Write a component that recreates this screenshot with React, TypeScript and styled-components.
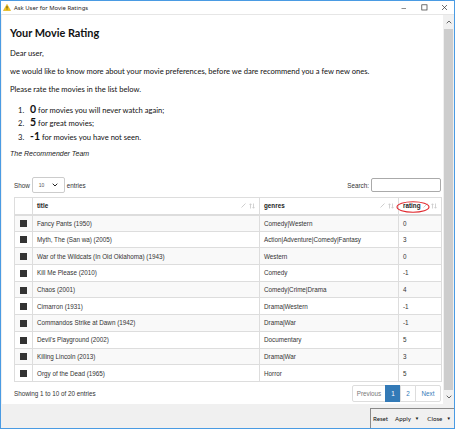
import React from "react";
import styled, { createGlobalStyle } from "styled-components";

const Global = createGlobalStyle`
  html, body { margin: 0; padding: 0; overflow: hidden; background: #fff; }
  * { box-sizing: border-box; }
`;

const Window = styled.div`
  width: 455px;
  height: 429px;
  border: 1px solid #4a9be3;
  display: flex;
  flex-direction: column;
  background: #f0f0f0;
  overflow: hidden;
`;

const TitleBar = styled.div`
  height: 14px;
  background: #fff;
  display: flex;
  align-items: center;
  padding-left: 2px;
  border-bottom: 1px solid #e6e6e6;
`;

const TitleText = styled.span`
  font-family: "Noto Sans", "Liberation Sans", sans-serif;
  font-size: 5.9px;
  color: #222;
  margin-left: 3px;
  flex: 1;
`;

const Controls = styled.div`
  display: flex;
  align-items: center;
  gap: 13.5px;
  padding-right: 6px;
`;

const Main = styled.div`
  flex: 1;
  display: flex;
  padding-left: 1px;
  min-height: 0;
`;

const Content = styled.div`
  flex: 1;
  background: #fff;
  padding-left: 8px;
  overflow: hidden;
  font-family: "Lato", "Liberation Sans", sans-serif;
  color: #111;
`;

const H1 = styled.h1`
  margin: 10px 0 0;
  font-size: 10.9px;
  line-height: 16px;
  font-weight: 700;
`;

const P = styled.p<{ $top?: number }>`
  margin: ${(p) => p.$top ?? 6}px 0 0;
  font-size: 7.6px;
  line-height: 12px;
  font-weight: 400;
`;

const Team = styled(P)`
  font-family: "Liberation Sans", Arial, sans-serif;
  font-size: 7px;
  font-style: italic;
  color: #1a1a1a;
`;

const List = styled.ol`
  margin: 7.5px 0 0;
  padding-left: 8px;
  list-style: none;
  font-size: 7.6px;
`;

const Item = styled.li`
  line-height: 13.5px;
  height: 13.5px;
  display: flex;
  align-items: baseline;
`;

const Num = styled.span`
  width: 12px;
  flex: none;
`;

const Big = styled.b`
  font-size: 10.5px;
  font-weight: 700;
  margin-right: 2px;
`;

const DataTable = styled.div`
  margin: 17px 0 0 4px;
  width: 427px;
  font-family: "Liberation Sans", Arial, sans-serif;
  font-size: 6.3px;
  color: #333;
`;

const TopRow = styled.div`
  display: flex;
  align-items: center;
  justify-content: space-between;
  height: 16px;
`;

const Inline = styled.div`
  display: flex;
  align-items: center;
  gap: 2px;
`;

const Select = styled.div`
  width: 33px;
  height: 16px;
  border: 1px solid #ccc;
  border-radius: 2px;
  display: flex;
  align-items: center;
  justify-content: space-between;
  padding: 0 6px 0 6px;
  font-size: 5px;
  color: #555;
`;

const SearchBox = styled.div`
  width: 70px;
  height: 14px;
  border: 1px solid #aaa;
  border-radius: 2px;
  background: #fff;
`;

const Table = styled.table`
  margin-top: 4px;
  width: 427px;
  border-collapse: collapse;
  table-layout: fixed;
  border: 1px solid #ddd;
`;

const Th = styled.th<{ $w: number }>`
  width: ${(p) => p.$w}px;
  height: 17px;
  text-align: left;
  font-weight: 700;
  padding: 0 0 0 4px;
  border: 1px solid #ddd;
  border-bottom: 2px solid #ddd;
  color: #222;
  position: relative;
`;

const ThInner = styled.div`
  display: flex;
  align-items: center;
  justify-content: space-between;
  padding-right: 4px;
`;

const ThIcons = styled.div`
  display: flex;
  align-items: center;
  gap: 3px;
`;

const Tr = styled.tr<{ $odd: boolean }>`
  height: 16.7px;
  background: ${(p) => (p.$odd ? "#f9f9f9" : "#fff")};
`;

const Td = styled.td`
  padding: 0 0 0 4px;
  border: 1px solid #ddd;
  white-space: nowrap;
  overflow: hidden;
`;

const BoxTd = styled.td`
  border: 1px solid #ddd;
  padding: 0;
  text-align: center;
`;

const Square = styled.span`
  display: inline-block;
  width: 7px;
  height: 7px;
  background: #333;
  vertical-align: middle;
`;

const Ellipse = styled.svg`
  position: absolute;
  left: -3px;
  top: 3px;
  pointer-events: none;
`;

const Bottom = styled.div`
  display: flex;
  align-items: center;
  justify-content: space-between;
  margin-top: 3px;
`;

const Pager = styled.div`
  display: flex;
  height: 17px;
`;

const PageBtn = styled.div<{ $w: number; $active?: boolean; $disabled?: boolean }>`
  width: ${(p) => p.$w}px;
  height: 17px;
  display: flex;
  align-items: center;
  justify-content: center;
  border: 1px solid ${(p) => (p.$active ? "#337ab7" : "#ddd")};
  margin-left: -1px;
  background: ${(p) => (p.$active ? "#337ab7" : "#fff")};
  color: ${(p) => (p.$active ? "#fff" : p.$disabled ? "#777" : "#337ab7")};
  &:first-child { border-radius: 2px 0 0 2px; }
  &:last-child { border-radius: 0 2px 2px 0; }
`;

const ScrollBar = styled.div`
  width: 11px;
  background: #f0f0f0;
  display: flex;
  flex-direction: column;
  align-items: center;
`;

const Arrow = styled.div`
  height: 14px;
  display: flex;
  align-items: center;
  justify-content: center;
`;

const Thumb = styled.div`
  flex: 1;
  width: 9px;
  background: #cdcdcd;
`;

const Footer = styled.div`
  height: 24px;
  display: flex;
  justify-content: flex-end;
  padding-top: 4px;
`;

const BtnGroup = styled.div`
  width: 84px;
  display: flex;
  align-items: center;
  border-left: 1px solid #8a8a8a;
  border-top: 1px solid #8a8a8a;
  padding: 0 0 0 2px;
  font-family: "Lato", "Liberation Sans", sans-serif;
  font-size: 6.2px;
  color: #111;
`;

const Btn = styled.span<{ $ml?: number }>`
  display: flex;
  align-items: center;
  gap: 4px;
  margin-left: ${(p) => p.$ml ?? 0}px;
`;

const Caret = styled.span`
  font-size: 4.5px;
`;

const Pencil = () => (
  <svg width="5" height="5" viewBox="0 0 5 5">
    <path d="M0.5 4.5 L4.5 0.5" stroke="#c8c8c8" strokeWidth="0.9" />
  </svg>
);

const Sort = () => (
  <svg width="6" height="6" viewBox="0 0 6 6" fill="none" stroke="#c8c8c8" strokeWidth="0.8">
    <path d="M1.5 5.5 V0.8 M0.5 1.8 L1.5 0.8 L2.5 1.8" />
    <path d="M4.5 0.5 V5.2 M3.5 4.2 L4.5 5.2 L5.5 4.2" />
  </svg>
);

const movies: [string, string, string][] = [
  ["Fancy Pants (1950)", "Comedy|Western", "0"],
  ["Myth, The (San wa) (2005)", "Action|Adventure|Comedy|Fantasy", "3"],
  ["War of the Wildcats (In Old Oklahoma) (1943)", "Western", "0"],
  ["Kill Me Please (2010)", "Comedy", "-1"],
  ["Chaos (2001)", "Comedy|Crime|Drama", "4"],
  ["Cimarron (1931)", "Drama|Western", "-1"],
  ["Commandos Strike at Dawn (1942)", "Drama|War", "-1"],
  ["Devil's Playground (2002)", "Documentary", "5"],
  ["Killing Lincoln (2013)", "Drama|War", "3"],
  ["Orgy of the Dead (1965)", "Horror", "5"],
];

const rules: [string, string][] = [
  ["0", "for movies you will never watch again;"],
  ["5", "for great movies;"],
  ["-1", "for movies you have not seen."],
];

export default function App() {
  return (
    <>
      <Global />
      <Window>
        <TitleBar>
          <svg width="8" height="7" viewBox="0 0 8 7">
            <path d="M4 0.3 L7.7 6.7 H0.3 Z" fill="#f3c414" stroke="#c99a00" strokeWidth="0.4" />
            <path d="M4 2.2 V4.6" stroke="#222" strokeWidth="0.8" />
            <circle cx="4" cy="5.6" r="0.45" fill="#222" />
          </svg>
          <TitleText>Ask User for Movie Ratings</TitleText>
          <Controls>
            <svg width="6" height="6" viewBox="0 0 6 6">
              <path d="M0.5 3.5 H5" stroke="#444" strokeWidth="0.6" />
            </svg>
            <svg width="7" height="7" viewBox="0 0 7 7">
              <rect x="0.8" y="0.8" width="5.2" height="5.2" fill="none" stroke="#333" strokeWidth="0.7" />
            </svg>
            <svg width="7" height="7" viewBox="0 0 7 7">
              <path d="M1 1 L6 6 M6 1 L1 6" stroke="#333" strokeWidth="0.7" />
            </svg>
          </Controls>
        </TitleBar>
        <Main>
          <Content>
            <H1>Your Movie Rating</H1>
            <P>Dear user,</P>
            <P>we would like to know more about your movie preferences, before we dare recommend you a few new ones.</P>
            <P>Please rate the movies in the list below.</P>
            <List>
              {rules.map((r, i) => (
                <Item key={i}>
                  <Num>{i + 1}.</Num>
                  <span>
                    <Big>{r[0]}</Big>
                    {r[1]}
                  </span>
                </Item>
              ))}
            </List>
            <Team $top={5}>The Recommender Team</Team>
            <DataTable>
              <TopRow>
                <Inline>
                  <span>Show</span>
                  <Select>
                    <span>10</span>
                    <svg width="6" height="4" viewBox="0 0 6 4">
                      <path d="M0.7 0.7 L3 3 L5.3 0.7" fill="none" stroke="#222" strokeWidth="1" />
                    </svg>
                  </Select>
                  <span>entries</span>
                </Inline>
                <Inline>
                  <span>Search:</span>
                  <SearchBox />
                </Inline>
              </TopRow>
              <Table>
                <thead>
                  <tr>
                    <Th $w={18} />
                    <Th $w={227}>
                      <ThInner>
                        <span>title</span>
                        <ThIcons>
                          <Pencil />
                          <Sort />
                        </ThIcons>
                      </ThInner>
                    </Th>
                    <Th $w={139}>
                      <ThInner>
                        <span>genres</span>
                        <ThIcons>
                          <Pencil />
                          <Sort />
                        </ThIcons>
                      </ThInner>
                    </Th>
                    <Th $w={43}>
                      <ThInner>
                        <span>rating</span>
                        <ThIcons>
                          <Pencil />
                          <Sort />
                        </ThIcons>
                      </ThInner>
                      <Ellipse width="34" height="12" viewBox="0 0 34 12">
                        <ellipse cx="17" cy="6" rx="16" ry="5.2" fill="none" stroke="#e0252b" strokeWidth="1.1" />
                      </Ellipse>
                    </Th>
                  </tr>
                </thead>
                <tbody>
                  {movies.map((m, i) => (
                    <Tr key={i} $odd={i % 2 === 0}>
                      <BoxTd>
                        <Square />
                      </BoxTd>
                      <Td>{m[0]}</Td>
                      <Td>{m[1]}</Td>
                      <Td>{m[2]}</Td>
                    </Tr>
                  ))}
                </tbody>
              </Table>
              <Bottom>
                <span>Showing 1 to 10 of 20 entries</span>
                <Pager>
                  <PageBtn $w={34} $disabled>Previous</PageBtn>
                  <PageBtn $w={16} $active>1</PageBtn>
                  <PageBtn $w={16}>2</PageBtn>
                  <PageBtn $w={26}>Next</PageBtn>
                </Pager>
              </Bottom>
            </DataTable>
          </Content>
          <ScrollBar>
            <Arrow>
              <svg width="6" height="4" viewBox="0 0 6 4">
                <path d="M0.7 3.3 L3 1 L5.3 3.3" fill="none" stroke="#555" strokeWidth="0.9" />
              </svg>
            </Arrow>
            <Thumb />
            <Arrow>
              <svg width="6" height="4" viewBox="0 0 6 4">
                <path d="M0.7 0.7 L3 3 L5.3 0.7" fill="none" stroke="#555" strokeWidth="0.9" />
              </svg>
            </Arrow>
          </ScrollBar>
        </Main>
        <Footer>
          <BtnGroup>
            <Btn>Reset</Btn>
            <Btn $ml={7}>
              Apply <Caret>▼</Caret>
            </Btn>
            <Btn $ml={8}>
              Close <Caret>▼</Caret>
            </Btn>
          </BtnGroup>
        </Footer>
      </Window>
    </>
  );
}
